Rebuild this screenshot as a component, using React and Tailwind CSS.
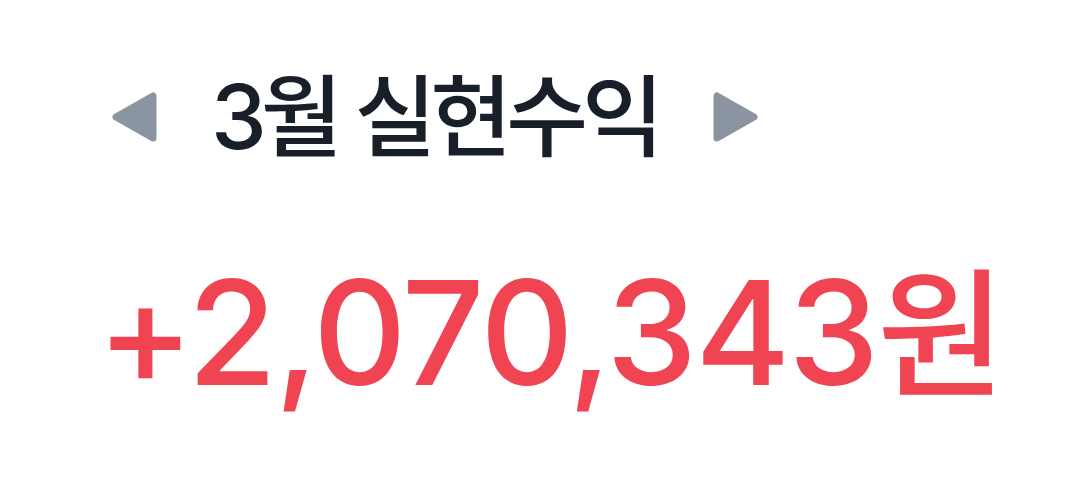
const Arrow = ({ dir }) => (
  <svg width="48" height="52" viewBox="0 0 48 52" className="shrink-0">
    {dir === "left" ? (
      <path d="M42 5 L42 47 L5 26 Z" fill="#8b95a1" stroke="#8b95a1" strokeWidth="7" strokeLinejoin="round" />
    ) : (
      <path d="M6 5 L6 47 L43 26 Z" fill="#8b95a1" stroke="#8b95a1" strokeWidth="7" strokeLinejoin="round" />
    )}
  </svg>
);

const App = () => {
  return (
    <div
      className="w-[1087px] h-[488px] bg-white overflow-hidden"
      style={{ fontFamily: 'Inter, "Noto Sans CJK KR", sans-serif' }}
    >
      <div className="flex items-center pl-[111px] pt-[67px]">
        <Arrow dir="left" />
        <h1 className="ml-[52px] text-[89px] leading-[100px] font-medium tracking-[-6px] text-[#191f28] whitespace-nowrap">
          3월 실현수익
        </h1>
        <div className="ml-[53px]">
          <Arrow dir="right" />
        </div>
      </div>
      <div className="pl-[97px] mt-[91px] flex items-baseline text-[#f04452] whitespace-nowrap">
        <span className="text-[145px] leading-[150px] font-medium tracking-[-2px]">+2,070,343</span>
        <span className="text-[139px] leading-[150px] font-medium">원</span>
      </div>
    </div>
  );
};

export default App;
